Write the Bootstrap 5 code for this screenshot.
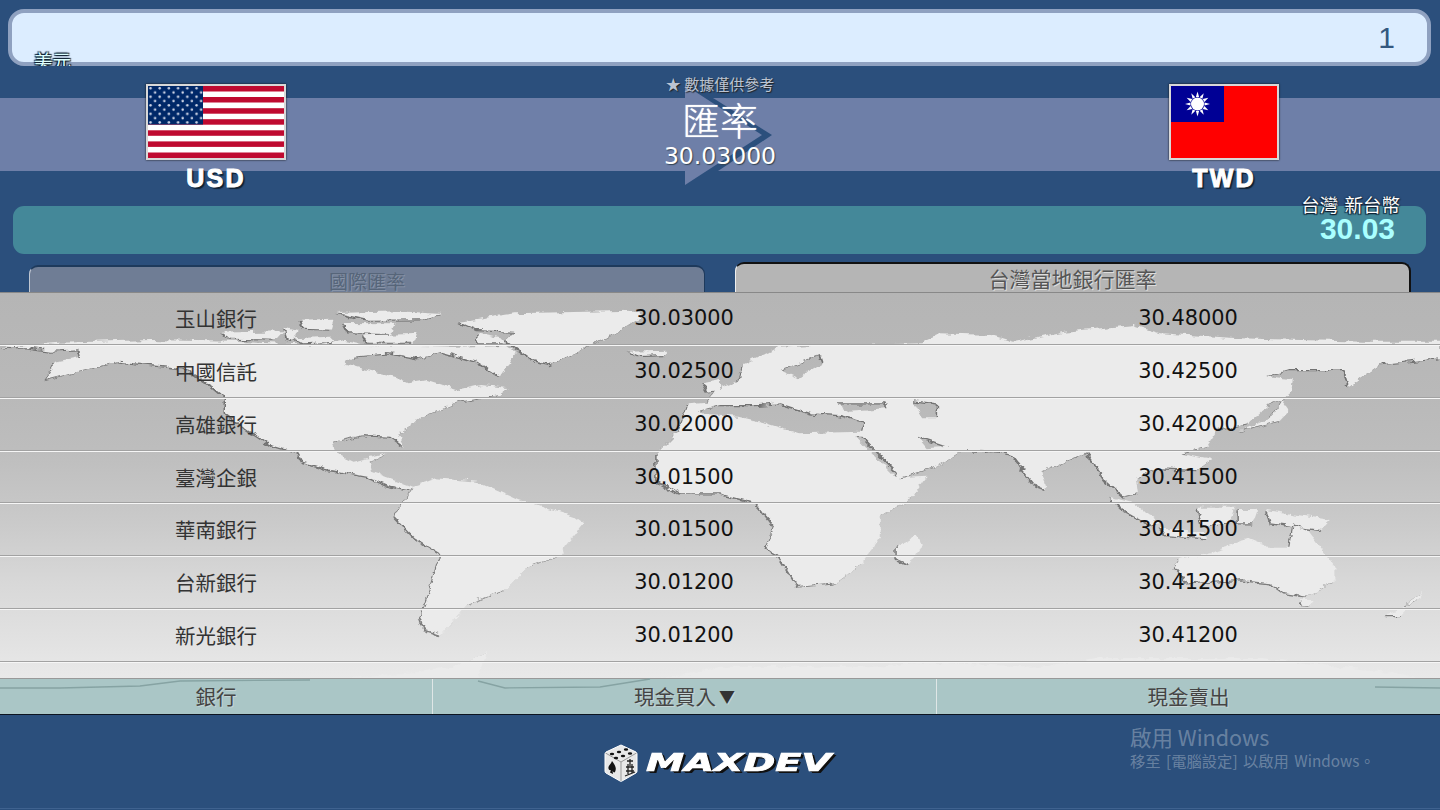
<!DOCTYPE html>
<html lang="zh-Hant">
<head>
<meta charset="utf-8">
<title>匯率</title>
<link href="https://cdn.jsdelivr.net/npm/bootstrap@5.3.0/dist/css/bootstrap.min.css" rel="stylesheet">
<style>
html,body{height:810px;overflow:hidden;background:#2b4f7c}
body{font-family:"Noto Sans CJK TC","Liberation Sans",sans-serif;color:#222}
.page-shell{width:1440px;height:810px}
.num{font-family:"DejaVu Sans","Noto Sans CJK TC",sans-serif}
.amount-box{margin:9px 9px 0 8px;height:57px;border:4px solid #8fa1c0;border-radius:16px;background:#dcedff;color:#34587f;font:30px "Liberation Sans",sans-serif;padding-right:32px}
.amount-label{left:34px;top:49px;font-size:18.5px;line-height:22px;color:#dff;text-shadow:-1px 1px 1px #123,1px 1px 1px #123,-1px -1px 1px #123,1px -1px 1px #123}
.hero{height:140px;background:linear-gradient(#2b4f7c 32px,#6e7fa8 32px,#6e7fa8 105px,#2b4f7c 105px)}
.side-col{width:30%;padding-top:18px}
.mid-col{width:40%;color:#fff;line-height:1}
.arrow-art{left:0;top:0;width:100%;height:100%}
.note{margin-top:10px;font-size:15px;line-height:16px;color:#bcc4d2;text-shadow:1px 1px 1px #222}
.rate-word{font-size:38px;line-height:44px;font-weight:300;margin-top:5px;text-shadow:0 0 1px #fff}
.rate-num{font-size:23.5px;line-height:26px;margin-top:2px;text-shadow:1px 1px 1px #345}
.flag-frame{display:block;border:2px solid #d8d8d8;box-shadow:0 0 2px #111;height:76px}
.code{font:bold 25px/26px "Liberation Sans",sans-serif;letter-spacing:2.2px;color:#fff;-webkit-text-stroke:1px #fff;text-shadow:1px 1px 1px #123,2px 2px 1px #123;margin-top:5px}
.result-bar{height:48px;margin:0 14px 0 13px;background:#448899;border-radius:11px;padding-right:31px}
.result-label{position:absolute;right:26px;top:-13px;font-size:18.5px;word-spacing:2px;line-height:22px;color:#fff;text-shadow:1px 1px 1px #123,-1px 1px 1px #123,0 0 2px #123}
.result-num{position:absolute;right:31px;top:5px;font:bold 30px/36px "Liberation Sans",sans-serif;color:#aaffff}
.tabs-row{height:38px;padding:0 29px;gap:30px}
.tab-off,.tab-on{width:676px;border-radius:9px 9px 0 0;text-align:center}
.tab-off{height:27px;background:#6f7d95;color:#566579;font-size:19px;line-height:27px;border-top:2px solid #1e3a5c;border-left:1px solid #c0c7d2;border-right:1px solid #1e3a5c;text-shadow:1px 1px 0 #8894a8}
.tab-on{height:30px;background:#b5b5b5;color:#555;font-size:21px;line-height:28px;border-top:2px solid #111;border-left:1px solid #eee;border-right:2px solid #111;text-shadow:1px 1px 0 #ddd}
.board{height:422px;background:linear-gradient(#b5b5b5 0,#b9b9b9 105px,#bdbdbd 155px,#cacaca 230px,#d8d8d8 290px,#e2e2e2 350px,#e9e9e9 385px);border-top:1px solid #888}
.map-art{left:0;top:0;width:1440px;height:421px}
.rate-list{margin-top:-.75px}
.rate-row{height:52.75px;padding-top:1px;border-bottom:1px solid #a2a2a2;box-shadow:0 1px 0 #f6f6f6;font-size:20.5px;color:#333}
.rate-row .num{font-size:20.9px;color:#111;padding-top:1px}
.c30{width:30%}.c35{width:35%}
.gap-fill{height:16.75px}
.head-row{height:37px;background:rgba(150,186,186,.76);border-top:1px solid #999;font-size:20.5px;color:#444;text-shadow:1px 1px 0 #c5d5d5}
.head-lines{left:0;top:-1px;width:1440px;height:37px}
.head-cell{position:relative}
.head-cell+.head-cell{border-left:1px solid #dfe6e6}
.tri{font-size:16px;color:#333;margin-left:3px}
.page-foot{height:95px;border-top:1px solid #0c1420;border-bottom:1px solid #3f628f;gap:8px;padding-top:2px}
.brand{font:italic bold 27px/30px "DejaVu Sans",sans-serif;color:#fff;-webkit-text-stroke:.8px #fff;margin-right:60px;transform-origin:left center;transform:scale(1.42,.92);text-shadow:1px 1px 0 #111,2px 2px 0 #111}
.activate{left:1130px;top:722px;color:rgba(255,255,255,.3);line-height:1}
.activate-a{font-size:21.5px;line-height:30px}
.activate-b{font-size:15.3px;word-spacing:2px;line-height:16px}
</style>
</head>
<body>
<div class="page-shell position-relative d-flex flex-column">

  <div class="amount-box d-flex align-items-center justify-content-end">1</div>
  <div class="amount-label position-absolute">美元</div>

  <div class="hero position-relative d-flex">
    <svg class="arrow-art position-absolute" viewBox="0 66 1440 140" aria-hidden="true">
      <polygon points="713,98 772,135 718,171 700,171 700,98" fill="#2b4f7c"/>
      <polygon points="685,85 762,135 685,185" fill="#6e7fa8"/>
    </svg>
    <div class="side-col d-flex flex-column align-items-center position-relative">
      <span class="flag-frame">
        <svg width="136" height="72" viewBox="0 0 136 72" style="display:block">
          <defs><pattern id="st" width="9.2" height="8.55" patternUnits="userSpaceOnUse"><circle cx="2.5" cy="2.200" r="1.250" fill="#cfd5e6"/><circle cx="7.100" cy="6.500" r="1.250" fill="#cfd5e6"/></pattern></defs>
          <rect width="136" height="72" fill="#fff"/>
          <g fill="#bf0a30"><rect y="0" width="136" height="5.500"/><rect y="11" width="136" height="5.500"/><rect y="22.200" width="136" height="5.500"/><rect y="33.200" width="136" height="5.500"/><rect y="44.300" width="136" height="5.500"/><rect y="55.400" width="136" height="5.500"/><rect y="66.500" width="136" height="5.500"/></g>
          <rect width="55" height="38.500" fill="#002868"/>
          <rect width="55" height="38.500" fill="url(#st)"/>
        </svg>
      </span>
      <div class="code">USD</div>
    </div>
    <div class="mid-col text-center position-relative">
      <div class="note">★ 數據僅供參考</div>
      <div class="rate-word">匯率</div>
      <div class="rate-num num">30.03000</div>
    </div>
    <div class="side-col d-flex flex-column align-items-center position-relative">
      <span class="flag-frame">
        <svg width="106" height="72" viewBox="0 0 106 72" style="display:block">
          <rect width="106" height="72" fill="#f00"/>
          <rect width="53" height="36" fill="#000095"/>
          <g fill="#fff" transform="translate(26.5 18)">
            <polygon id="ray" points="-1.6,-7 0,-12.5 1.6,-7"/>
            <use href="#ray" transform="rotate(30)"/><use href="#ray" transform="rotate(60)"/><use href="#ray" transform="rotate(90)"/><use href="#ray" transform="rotate(120)"/><use href="#ray" transform="rotate(150)"/><use href="#ray" transform="rotate(180)"/><use href="#ray" transform="rotate(210)"/><use href="#ray" transform="rotate(240)"/><use href="#ray" transform="rotate(270)"/><use href="#ray" transform="rotate(300)"/><use href="#ray" transform="rotate(330)"/>
            <circle r="6.5"/>
          </g>
        </svg>
      </span>
      <div class="code">TWD</div>
    </div>
  </div>

  <div class="result-bar position-relative">
    <div class="result-label">台灣 新台幣</div>
    <div class="result-num">30.03</div>
  </div>

  <div class="tabs-row d-flex align-items-end">
    <div class="tab-off">國際匯率</div>
    <div class="tab-on">台灣當地銀行匯率</div>
  </div>

  <div class="board position-relative d-flex flex-column">
    <svg class="map-art position-absolute" viewBox="0 293 1440 421" aria-hidden="true">
      <defs>
        <filter id="rough" x="0" y="293" width="1440" height="470" filterUnits="userSpaceOnUse" primitiveUnits="userSpaceOnUse">
          <feTurbulence type="fractalNoise" baseFrequency=".09 .16" numOctaves="3" seed="4" result="n"/>
          <feDisplacementMap in="SourceGraphic" in2="n" scale="7" xChannelSelector="R" yChannelSelector="G"/>
        </filter>
        <g id="land" transform="translate(0 290) scale(.4592 .3333)">
          <path fill-rule="evenodd" d="M0,170 60,172 110,182 170,178 175,200 120,215 100,270 170,245 260,215 330,225 400,235 460,285 490,320 490,370 540,420 590,465 650,490 660,515 720,540 800,560 850,590 890,600 900,590 830,555 810,545 805,515 845,490 770,515 730,490 725,455 790,435 850,440 880,470 868,430 920,380 1000,335 1090,315 1110,295 1050,285 1000,300 930,270 890,280 860,260 800,240 750,220 770,200 850,190 910,205 960,185 1040,215 1090,260 1125,190 1100,165 1000,170 800,165 750,150 700,165 500,155 330,150 130,158 0,170Z
          M1000,95 1120,70 1380,62 1400,80 1340,130 1290,165 1200,222 1160,210 1130,180 1100,150 1120,125 1040,120Z
          M733,69 871,64 960,72 920,88 800,89Z
          M653,92 726,89 720,119 660,116Z M479,128 617,124 600,149 500,146Z M748,99 857,100 850,132 760,130Z M791,136 907,132 900,158 800,158Z M620,110 650,120 640,150 625,145Z M640,145 720,140 730,155 660,160Z M1040,130 1090,145 1100,160 1040,160Z
          M1370,185 1450,182 1450,195 1390,198Z M1530,280 1568,270 1568,300 1540,305Z
          M890,610 900,590 950,565 1040,575 1130,630 1250,680 1270,700 1230,770 1215,800 1150,830 1100,900 1020,940 990,990 960,1035 925,1020 915,980 935,900 960,790 905,745 860,680 880,630Z
          M-20,1195 200,1190 400,1170 680,1172 900,1150 1000,1125 1060,1085 1040,1160 1040,1175 1100,1195 1300,1190 1450,1165 1568,1130 1868,1130 1998,1120 2068,1120 2248,1130 2408,1105 2748,1105 3048,1150 3160,1190 3160,1400 -20,1400Z"/>
          <g transform="translate(1568 0)">
            <path fill-rule="evenodd" d="M-68,340 -30,335 -10,300 40,270 50,225 130,170 200,165 300,165 440,160 480,130 590,135 640,155 750,125 900,105 960,130 1130,145 1400,155 1568,155 1568,205 1440,222 1370,290 1360,240 1240,240 1190,262 1245,270 1240,320 1190,350 1150,400 1085,420 1060,470 1000,490 1070,510 1040,540 960,535 905,560 910,610 880,620 840,570 800,490 760,510 700,545 710,600 690,590 640,500 610,485 530,480 470,530 390,565 450,560 420,620 350,680 350,740 310,820 250,880 170,890 130,800 100,770 120,710 80,640 0,610 -88,610 -138,570 -138,490 -88,420Z
            M-50,365 0,345 80,345 130,340 200,370 260,375 315,395 310,425 170,430 100,400 40,380 -30,375Z
            M250,340 360,340 365,355 280,362Z M420,330 475,340 475,385 440,385Z M430,440 495,470 450,475Z M130,240 220,195 225,215 170,265Z
            M295,440 330,490 380,560 385,545 345,490 310,440Z
            M430,735 440,770 410,825 385,810 385,770Z
            M1130,425 1215,395 1240,360 1225,330 1200,385Z
            M850,620 900,640 960,700 940,705 880,660Z M960,715 1060,730 1060,745 970,735Z M1040,650 1120,650 1110,700 1050,710Z M1130,660 1170,660 1160,700 1130,700Z M1190,660 1330,690 1310,720 1200,700Z
            M1000,810 1070,790 1150,745 1195,770 1240,770 1250,700 1280,720 1340,830 1340,870 1280,920 1230,910 1200,880 1130,870 1020,880 990,830Z
            M1262,930 1295,930 1285,947 1268,945Z M1530,905 1520,930 1490,950 1500,935Z M1490,950 1450,975 1490,975Z"/>
          </g>
        </g>
      </defs>
      <g filter="url(#rough)">
        <use href="#land" fill="#555" opacity=".7" transform="translate(-1.500 1.200)"/>
        <use href="#land" fill="#ebebeb"/>
      </g>
    </svg>

    <div class="rate-list position-relative">
      <div class="rate-row d-flex align-items-center text-center"><div class="c30">玉山銀行</div><div class="c35 num">30.03000</div><div class="c35 num">30.48000</div></div>
      <div class="rate-row d-flex align-items-center text-center"><div class="c30">中國信託</div><div class="c35 num">30.02500</div><div class="c35 num">30.42500</div></div>
      <div class="rate-row d-flex align-items-center text-center"><div class="c30">高雄銀行</div><div class="c35 num">30.02000</div><div class="c35 num">30.42000</div></div>
      <div class="rate-row d-flex align-items-center text-center"><div class="c30">臺灣企銀</div><div class="c35 num">30.01500</div><div class="c35 num">30.41500</div></div>
      <div class="rate-row d-flex align-items-center text-center"><div class="c30">華南銀行</div><div class="c35 num">30.01500</div><div class="c35 num">30.41500</div></div>
      <div class="rate-row d-flex align-items-center text-center"><div class="c30">台新銀行</div><div class="c35 num">30.01200</div><div class="c35 num">30.41200</div></div>
      <div class="rate-row d-flex align-items-center text-center"><div class="c30">新光銀行</div><div class="c35 num">30.01200</div><div class="c35 num">30.41200</div></div>
    </div>
    <div class="gap-fill"></div>
    <div class="head-row d-flex position-relative text-center">
      <svg class="head-lines position-absolute" viewBox="0 678 1440 37" aria-hidden="true" fill="none" stroke="#86a3a3" stroke-width="1.300">
        <polyline points="0,688 60,688 140,686 180,681 310,680"/>
        <polyline points="478,681 505,688 600,687 650,679"/>
        <polyline points="1375,687 1440,688"/>
      </svg>
      <div class="head-cell c30 d-flex align-items-center justify-content-center">銀行</div>
      <div class="head-cell c35 d-flex align-items-center justify-content-center">現金買入<span class="tri">▼</span></div>
      <div class="head-cell c35 d-flex align-items-center justify-content-center">現金賣出</div>
    </div>
  </div>

  <div class="page-foot d-flex align-items-center justify-content-center">
    <svg width="34" height="38" viewBox="0 0 34 38" aria-hidden="true">
      <path d="M17 1 32 8Q33 8.600 33 10V27Q33 28.500 32 29L18 37Q17 37.500 16 37L2 29Q1 28.500 1 27V10Q1 8.600 2 8Z" fill="#e8e8e8" stroke="#fff"/>
      <path d="M1.500 9 17 18 32.500 9M17 18V37" stroke="#999" fill="none"/>
      <g fill="#111"><ellipse cx="8" cy="10" rx="2.200" ry="1.300"/><ellipse cx="15" cy="8" rx="2.200" ry="1.300"/><ellipse cx="22" cy="5.500" rx="2.200" ry="1.300"/><ellipse cx="12" cy="14" rx="2.200" ry="1.300"/><ellipse cx="19" cy="12" rx="2.200" ry="1.300"/><ellipse cx="26" cy="9.500" rx="2.200" ry="1.300"/></g>
      <path d="M8 17C11 21 13 24 11 28 10 29 9 28 8.500 26.500L9 30 6 28.500 7 26C5.500 27 4 25 4.500 23 5 21 7 20 8 17Z" fill="#111"/>
      <path d="M23 17H29M26 15V22M22 23H30M24 20V30M28 20V30M22 27H30M21 32 31 28" stroke="#222" stroke-width="1.300" fill="none"/>
    </svg>
    <div class="brand">MAXDEV</div>
  </div>

  <div class="activate position-absolute">
    <div class="activate-a">啟用 Windows</div>
    <div class="activate-b">移至 [電腦設定] 以啟用 Windows。</div>
  </div>
</div>
<script src="https://cdn.jsdelivr.net/npm/bootstrap@5.3.0/dist/js/bootstrap.bundle.min.js"></script>
</body>
</html>
